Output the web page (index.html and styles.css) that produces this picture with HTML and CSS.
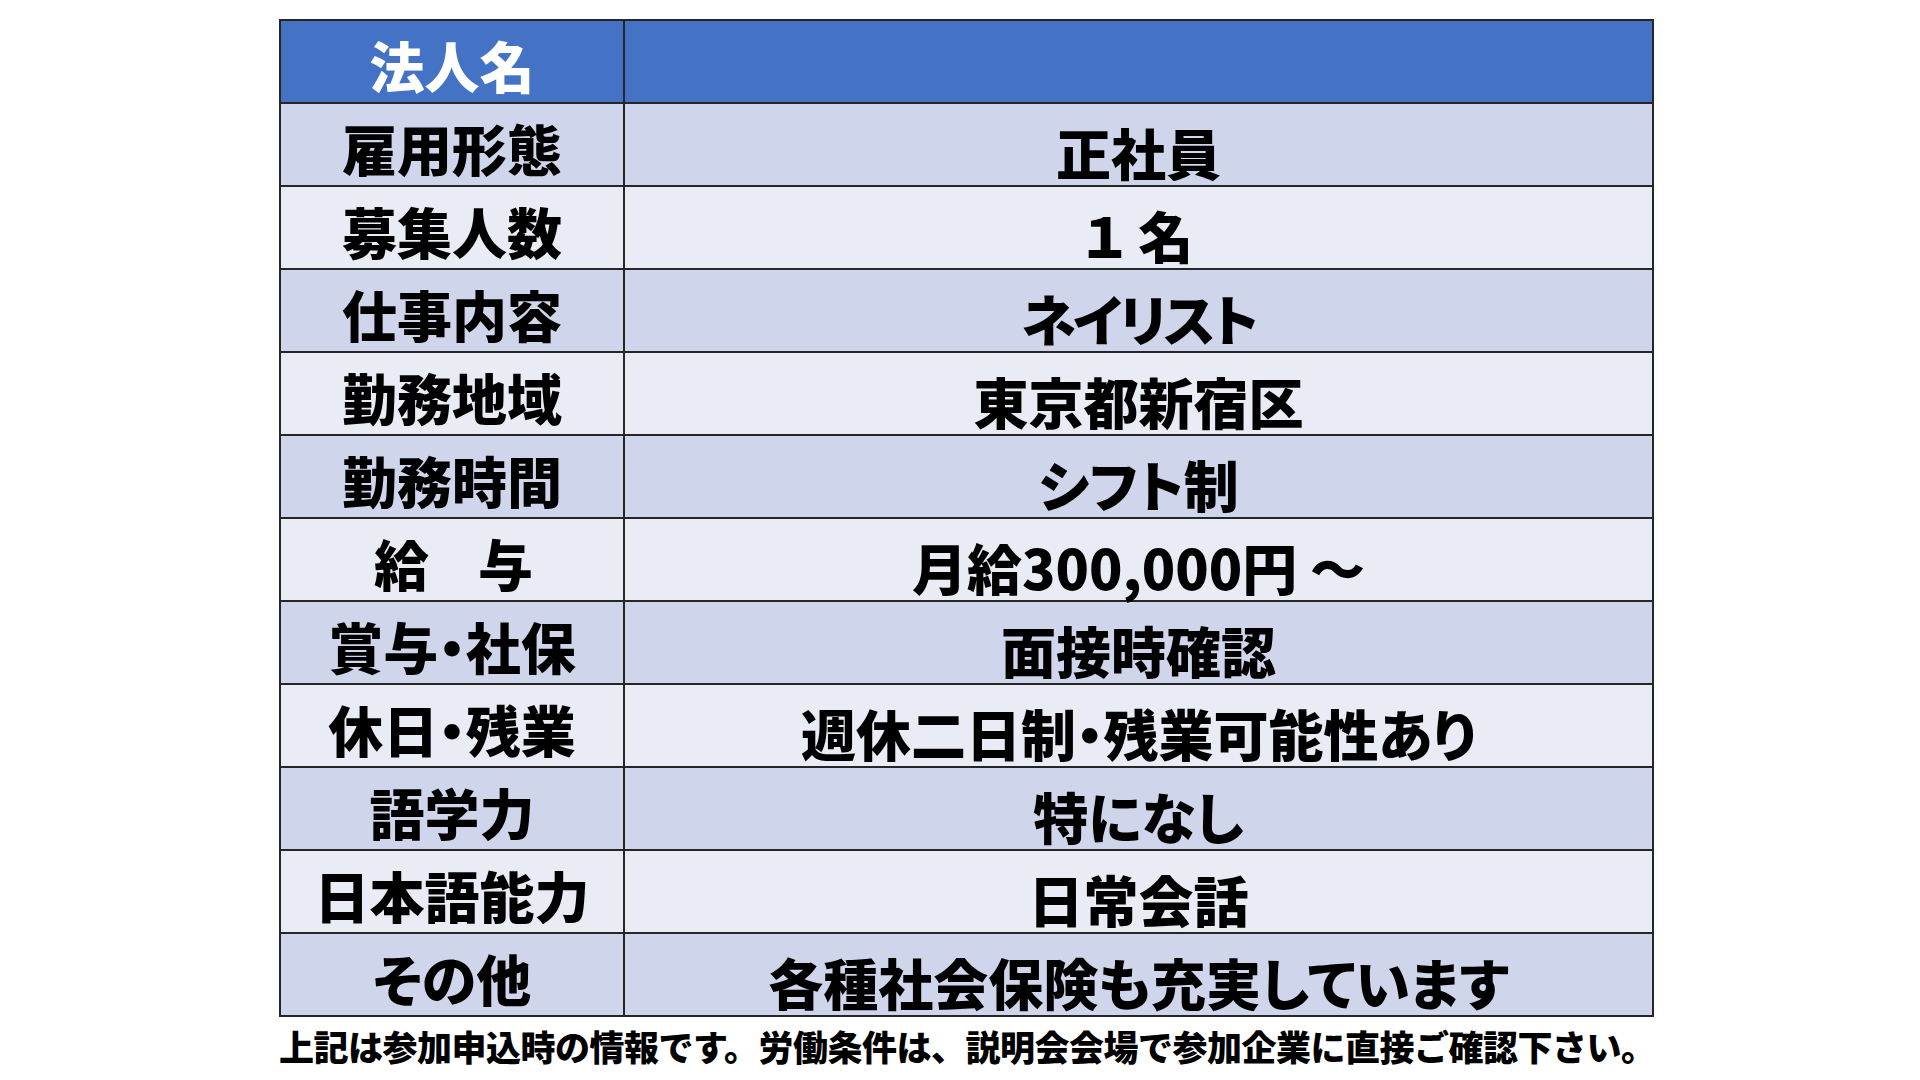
FILE: index.html
```html
<!DOCTYPE html>
<html lang="ja">
<head>
<meta charset="utf-8">
<title>求人情報</title>
<link rel="stylesheet" href="styles.css">
</head>
<body>
<div class="page">
  <table class="jobs">
    <colgroup><col class="c-label"><col class="c-value"></colgroup>
    <tr class="head"><th class="label">法人名</th><td class="value"></td></tr>
    <tr class="dark"><th class="label">雇用形態</th><td class="value">正社員</td></tr>
    <tr class="light"><th class="label">募集人数</th><td class="value">１ 名</td></tr>
    <tr class="dark"><th class="label">仕事内容</th><td class="value narrow">ネイリスト</td></tr>
    <tr class="light"><th class="label">勤務地域</th><td class="value">東京都新宿区</td></tr>
    <tr class="dark"><th class="label">勤務時間</th><td class="value">シフト制</td></tr>
    <tr class="light"><th class="label narrow">給　与</th><td class="value">月給300,000円 ～</td></tr>
    <tr class="dark"><th class="label">賞与・社保</th><td class="value">面接時確認</td></tr>
    <tr class="light"><th class="label">休日・残業</th><td class="value">週休二日制・残業可能性あり</td></tr>
    <tr class="dark"><th class="label">語学力</th><td class="value">特になし</td></tr>
    <tr class="light"><th class="label">日本語能力</th><td class="value">日常会話</td></tr>
    <tr class="dark"><th class="label">その他</th><td class="value">各種社会保険も充実しています</td></tr>
  </table>
  <p class="note">上記は参加申込時の情報です。労働条件は、説明会会場で参加企業に直接ご確認下さい。</p>
</div>
</body>
</html>
```

FILE: styles.css
```css
html, body {
  margin: 0;
  padding: 0;
  background: #ffffff;
}
.page {
  padding: 19px 0 0 279px;
  font-family: "Noto Sans CJK JP", "Noto Sans", sans-serif;
  color: #000;
}
.jobs {
  border-collapse: collapse;
  width: 1373px;
  table-layout: fixed;
  font-feature-settings: "palt";
}
.c-label { width: 344px; }
.c-value { width: 1029px; }
.jobs th, .jobs td {
  border: 2px solid #262626;
  height: 83px;
  padding: 0;
  box-sizing: border-box;
  text-align: center;
  font-size: 55px;
  font-weight: 900;
  line-height: 1;
  vertical-align: middle;
}
.jobs .label { padding-top: 5px; }
.jobs .value { padding-top: 14px; }
.jobs .narrow { letter-spacing: -3px; }
.head th, .head td { background: #4472c4; color: #fff; }
.dark th, .dark td { background: #cfd5ea; }
.light th, .light td { background: #e9ebf5; }
.note {
  margin: 8px 0 0 0;
  font-size: 35px;
  font-weight: 900;
  line-height: 1.2;
  letter-spacing: -0.5px;
  white-space: nowrap;
}
```
